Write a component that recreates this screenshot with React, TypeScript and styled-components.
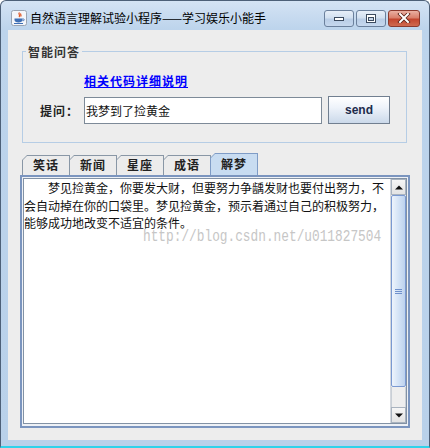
import styled, { createGlobalStyle } from "styled-components";

const GlobalStyle = createGlobalStyle`
  html, body { margin:0; padding:0; background:#ffffff; }
  body { font-family: "Noto Sans CJK SC", "Liberation Sans", sans-serif; }
`;

//window frame
const Frame = styled.div`
    width:430px;
    height:448px;
    box-sizing:border-box;
    border:1px solid #4d6078;
    border-bottom:2px solid #2fd2ea;
    border-radius:6px 6px 0 0;
    background: linear-gradient(#d4e3f4, #bdd4ec 28px, #b9d1ea);
    padding:0 7px;
    display:flex;
    flex-direction:column;
`;
const TitleBar = styled.div`
    height:29px;
    box-sizing:border-box;
    padding:5px 2px 0 3px;
    display:flex;
    align-items:center;
`;
const Title = styled.span`
    margin-left:3px;
    font-size:12px;
    line-height:14px;
    color:#000;
    flex:1;
    white-space:nowrap;
`;
const WinButtons = styled.div`
    display:flex;
    gap:3px;
`;
const WinButton = styled.div<{ $close?: boolean; $w: number }>`
    width:${p => p.$w}px;
    height:17px;
    box-sizing:border-box;
    border:1px solid ${p => (p.$close ? "#8b3a2e" : "#6b809c")};
    border-radius:3px;
    background:${p =>
        p.$close
            ? "linear-gradient(#eab0a2, #d9806c 45%, #c3462f 55%, #cf6a50)"
            : "linear-gradient(#e6eef8, #d2e0f0 45%, #b9cde6 55%, #c6d8ee)"};
    display:flex;
    align-items:center;
    justify-content:center;
    & + & { margin-left:${p => (p.$close ? "-1px" : "0")}; }
`;

//client area
const Client = styled.div`
    height:410px;
    background:#ededed;
    display:flex;
    flex-direction:column;
`;
const Group = styled.div`
    position:relative;
    margin:21px 15px 0 14px;
    height:92px;
    box-sizing:border-box;
    border:1px solid #b6cde5;
    padding-top:22px;
`;
const Legend = styled.span`
    position:absolute;
    top:-8px;
    left:3px;
    padding:0 2px;
    background:#ededed;
    font-size:12px;
    font-weight:700;
    letter-spacing:1px;
    line-height:16px;
    color:#333;
`;
const DocLink = styled.a`
    display:block;
    margin-left:61px;
    width:max-content;
    font-size:12px;
    font-weight:700;
    letter-spacing:1px;
    line-height:14px;
    color:#0000ff;
    text-decoration:underline;
`;
const AskRow = styled.div`
    display:flex;
    align-items:center;
    margin-top:8px;
`;
const Label = styled.span`
    margin-left:17px;
    width:44px;
    font-size:12px;
    font-weight:700;
    letter-spacing:1px;
    color:#222;
`;
const Field = styled.div`
    width:238px;
    height:27px;
    box-sizing:border-box;
    border:1px solid #7d8a98;
    background:#fff;
    padding-left:1px;
    font-size:12px;
    line-height:25px;
    color:#111;
`;
const SendButton = styled.div`
    margin-left:6px;
    width:62px;
    height:28px;
    box-sizing:border-box;
    border:1px solid #717f90;
    background:linear-gradient(#ffffff, #eef3fa 40%, #cbd9ea);
    display:flex;
    align-items:center;
    justify-content:center;
    font-family:"Liberation Sans", sans-serif;
    font-size:12px;
    font-weight:700;
    color:#1d2b4c;
`;

//tabs
const TabRow = styled.div`
    display:flex;
    align-items:flex-end;
    height:22px;
    margin:10px 0 0 14px;
`;
const Tab = styled.div<{ $active?: boolean }>`
    width:48px;
    height:${p => (p.$active ? 22 : 20)}px;
    margin-right:-1px;
    box-sizing:border-box;
    padding:1px 1px 0 1px;
    background:${p => (p.$active ? "#7f9cc6" : "#8997a6")};
    clip-path:polygon(5px 0, 100% 0, 100% 100%, 0 100%, 0 5px);
`;
const TabFace = styled.div<{ $active?: boolean }>`
    height:100%;
    box-sizing:border-box;
    padding-bottom:2px;
    background:${p => (p.$active ? "#c8dcf1" : "#ececec")};
    clip-path:polygon(4px 0, 100% 0, 100% 100%, 0 100%, 0 4px);
    display:flex;
    align-items:center;
    justify-content:center;
    font-size:12px;
    font-weight:700;
    letter-spacing:1px;
    color:#222;
`;
const Panel = styled.div`
    width:390px;
    height:253px;
    margin-left:12px;
    box-sizing:border-box;
    border:2px solid #7b95bf;
    padding:1px 1px 2px 1px;
    background:#eef1f6;
`;
const ScrollPane = styled.div`
    height:100%;
    box-sizing:border-box;
    border:1px solid #8292a5;
    background:#fff;
    display:flex;
`;
const TextArea = styled.div`
    position:relative;
    flex:1;
    padding:0 4px 0 0;
    font-size:12px;
    line-height:17.5px;
    text-indent:24px;
    color:#111;
    overflow:hidden;
`;
const Watermark = styled.span`
    position:absolute;
    left:119px;
    top:49px;
    text-indent:0;
    white-space:nowrap;
    font-family:"Liberation Mono", monospace;
    font-size:16px;
    line-height:18px;
    color:#c6c6c6;
    transform:scaleX(0.8);
    transform-origin:left top;
`;

//scrollbar
const ScrollBar = styled.div`
    width:15px;
    display:flex;
    flex-direction:column;
    background:#eeeeee;
    border-left:1px solid #d4d8de;
`;
const ArrowButton = styled.div`
    height:16px;
    box-sizing:border-box;
    border:1px solid #a9b3bf;
    background:linear-gradient(#f6f6f6, #e3e3e3);
    display:flex;
    align-items:center;
    justify-content:center;
`;
const Thumb = styled.div`
    height:192px;
    box-sizing:border-box;
    border:1px solid #7a99d2;
    border-radius:2px;
    background:linear-gradient(90deg, #eef4fc, #d4e3f6 50%, #bdd2ee);
    display:flex;
    flex-direction:column;
    align-items:center;
    justify-content:center;
    gap:1px;
`;
const Grip = styled.div`
    width:7px;
    height:1px;
    background:#6f90cc;
`;
const Track = styled.div`
    flex:1;
    border:1px solid #c9cfd6;
    border-top:none;
    border-bottom:none;
`;

function JavaIcon() {
    return (
        <svg width="16" height="16" viewBox="0 0 16 16">
            <rect x="0.5" y="0.5" width="15" height="15" rx="2" fill="#f4f6fa" stroke="#9aa4b2" />
            <path d="M8.5 2.5c-2 1.5 1.5 2.5-0.5 4.5M10 3.5c-1.3 1 1 1.6-0.4 3" stroke="#e0531f" strokeWidth="1.2" fill="none" />
            <path d="M3.5 8.5h8v1.5c0 1.6-1.6 2.5-4 2.5s-4-0.9-4-2.5z" fill="#3f6fb4" />
            <path d="M11.5 9h1c1 0 1 1.6 0 1.6h-1" stroke="#3f6fb4" strokeWidth="0.9" fill="none" />
            <path d="M3 13.5h9" stroke="#3f6fb4" strokeWidth="1" />
        </svg>
    );
}

function MinGlyph() {
    return (
        <svg width="12" height="8" viewBox="0 0 12 8">
            <rect x="1.5" y="3.5" width="9" height="3" fill="#fff" stroke="#3b4a5e" />
        </svg>
    );
}

function MaxGlyph() {
    return (
        <svg width="12" height="9" viewBox="0 0 12 9">
            <rect x="1.5" y="0.5" width="9" height="8" fill="#fff" stroke="#3b4a5e" />
            <rect x="3.5" y="3.5" width="5" height="3" fill="#c6d6ea" stroke="#3b4a5e" />
        </svg>
    );
}

function CloseGlyph() {
    return (
        <svg width="14" height="10" viewBox="0 0 14 10">
            <path d="M3 1l8 8M11 1l-8 8" stroke="#5a2218" strokeWidth="3.6" strokeLinecap="square" />
            <path d="M3 1l8 8M11 1l-8 8" stroke="#fff" strokeWidth="2" strokeLinecap="square" />
        </svg>
    );
}

function Arrow({ up }: { up?: boolean }) {
    return (
        <svg width="8" height="5" viewBox="0 0 8 5">
            <path d={up ? "M0 4.5L4 0.5L8 4.5z" : "M0 0.5L4 4.5L8 0.5z"} fill="#111" />
        </svg>
    );
}

const tabs = ["笑话", "新闻", "星座", "成语", "解梦"];
const answer =
    "梦见捡黄金，你要发大财，但要努力争龋发财也要付出努力，不会自动掉在你的口袋里。梦见捡黄金，预示着通过自己的积极努力，能够成功地改变不适宜的条件。";

function App() {
    return (
        <>
            <GlobalStyle />
            <Frame>
                <TitleBar>
                    <JavaIcon />
                    <Title>自然语言理解试验小程序——学习娱乐小能手</Title>
                    <WinButtons>
                        <WinButton $w={30}><MinGlyph /></WinButton>
                        <WinButton $w={30}><MaxGlyph /></WinButton>
                        <WinButton $w={32} $close><CloseGlyph /></WinButton>
                    </WinButtons>
                </TitleBar>
                <Client>
                    <Group>
                        <Legend>智能问答</Legend>
                        <DocLink>相关代码详细说明</DocLink>
                        <AskRow>
                            <Label>提问：</Label>
                            <Field>我梦到了捡黄金</Field>
                            <SendButton>send</SendButton>
                        </AskRow>
                    </Group>
                    <TabRow>
                        {tabs.map((t, i) => (
                            <Tab key={t} $active={i === 4}>
                                <TabFace $active={i === 4}>{t}</TabFace>
                            </Tab>
                        ))}
                    </TabRow>
                    <Panel>
                        <ScrollPane>
                            <TextArea>
                                {answer}
                                <Watermark>http://blog.csdn.net/u011827504</Watermark>
                            </TextArea>
                            <ScrollBar>
                                <ArrowButton><Arrow up /></ArrowButton>
                                <Thumb>
                                    <Grip />
                                    <Grip />
                                    <Grip />
                                </Thumb>
                                <Track />
                                <ArrowButton><Arrow /></ArrowButton>
                            </ScrollBar>
                        </ScrollPane>
                    </Panel>
                </Client>
            </Frame>
        </>
    );
}

export default App;
